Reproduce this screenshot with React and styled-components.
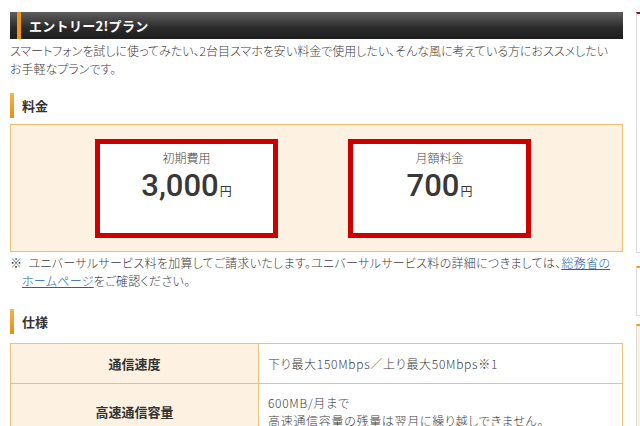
import React from 'react';
import styled, { createGlobalStyle } from 'styled-components';

const GlobalStyle = createGlobalStyle`
    html, body {
        margin: 0;
        padding: 0;
        background: #fff;
        overflow: hidden;
    }
    body {
        font-family: "Noto Sans CJK JP", "Liberation Sans", sans-serif;
        color: #3c3c3c;
        font-size: 12px;
    }
    #root {
        height: 426px;
        overflow: hidden;
    }
`;

const Page = styled.div`
    display: flex;
    align-items: flex-start;
    gap: 13px;
    padding: 12px 0 0 10px;
    width: 900px;
`;

const Main = styled.main`
    width: 613px;
    flex-shrink: 0;
`;

const PlanTitle = styled.h2`
    position: relative;
    margin: 0;
    height: 27px;
    display: flex;
    align-items: center;
    padding-left: 19px;
    background: linear-gradient(#5e5e5e, #2a2a2a 60%, #1e1e1e);
    color: #fff;
    font-size: 13px;
    font-weight: 700;
    letter-spacing: 0.3px;
    &::before {
        content: '';
        position: absolute;
        left: 7px;
        top: 0;
        bottom: 0;
        width: 4px;
        background: #f0960f;
    }
`;

const Lead = styled.p`
    margin: 3px 0 0;
    line-height: 18px;
    font-weight: 300;
    font-feature-settings: 'palt';
    white-space: nowrap;
`;

const SectionTitle = styled.h3`
    margin: ${(p) => p.$top}px 0 0;
    height: 25px;
    display: flex;
    align-items: center;
    border-left: 4px solid #f0a02a;
    border-image: linear-gradient(#f6b84a, #e58c12) 1;
    padding-left: 8px;
    font-size: 13px;
    font-weight: 700;
    color: #333;
`;

const PriceBox = styled.div`
    margin-top: 6px;
    display: flex;
    gap: 70px;
    padding: 14px 0 13px 84px;
    background: #fdf1e1;
    border: 1px solid #e9bf72;
`;

const PriceCard = styled.div`
    width: 173px;
    height: 83px;
    border: 5px solid #cc0000;
    background: #fff;
    display: flex;
    flex-direction: column;
    align-items: center;
    padding-top: 6px;
    box-sizing: content-box;
`;

const CardLabel = styled.div`
    font-size: 12px;
    line-height: 16px;
    font-weight: 300;
    color: #444;
`;

const Amount = styled.div`
    margin-top: 2px;
    font-family: Roboto, "Liberation Sans", sans-serif;
    font-size: 31px;
    font-weight: 500;
    line-height: 36px;
    color: #383838;
    span {
        font-family: "Noto Sans CJK JP", sans-serif;
        font-size: 12px;
        font-weight: 400;
        margin-left: 1px;
    }
`;

const Note = styled.p`
    margin: 2px 0 0;
    padding-left: 12px;
    line-height: 18px;
    font-weight: 300;
    letter-spacing: 0.3px;
    font-feature-settings: 'palt';
    white-space: nowrap;
    a {
        color: #1a64b0;
        text-decoration: underline;
    }
`;

const Mark = styled.span`
    margin-left: -12px;
    margin-right: 6px;
`;

const SpecTable = styled.table`
    margin-top: 9px;
    width: 100%;
    border-collapse: collapse;
    font-size: 12px;
    th, td {
        border: 1px solid #e9c27c;
    }
    th {
        width: 245px;
        background: #fdf1e1;
        font-size: 13px;
        font-weight: 700;
        color: #333;
    }
    td {
        padding: 0 9px;
        line-height: 18px;
        font-weight: 300;
        letter-spacing: 0.7px;
        font-feature-settings: 'palt';
    }
`;

const Row = styled.tr`
    height: ${(p) => p.$h}px;
`;

const Side = styled.aside`
    width: 200px;
    flex-shrink: 0;
    display: flex;
    flex-direction: column;
`;

const Widget = styled.div`
    height: ${(p) => p.$h}px;
    margin-top: ${(p) => p.$gap || 0}px;
    border: 1px solid #ddd;
    border-top: 2px solid ${(p) => p.$accent};
    background: ${(p) => p.$bg || '#fff'};
`;

export default function App() {
    return (
        <>
            <GlobalStyle />
            <Page>
                <Main>
                    <PlanTitle>エントリー2!プラン</PlanTitle>
                    <Lead>
                        スマートフォンを試しに使ってみたい、2台目スマホを安い料金で使用したい、そんな風に考えている方におススメしたい
                        <br />
                        お手軽なプランです。
                    </Lead>

                    <SectionTitle $top={15}>料金</SectionTitle>
                    <PriceBox>
                        <PriceCard>
                            <CardLabel>初期費用</CardLabel>
                            <Amount>3,000<span>円</span></Amount>
                        </PriceCard>
                        <PriceCard>
                            <CardLabel>月額料金</CardLabel>
                            <Amount>700<span>円</span></Amount>
                        </PriceCard>
                    </PriceBox>
                    <Note>
                        <Mark>※</Mark>ユニバーサルサービス料を加算してご請求いたします。ユニバーサルサービス料の詳細につきましては、<a href="#">総務省の</a>
                        <br />
                        <a href="#">ホームページ</a>をご確認ください。
                    </Note>

                    <SectionTitle $top={19}>仕様</SectionTitle>
                    <SpecTable>
                        <tbody>
                            <Row $h={40}>
                                <th>通信速度</th>
                                <td>下り最大150Mbps／上り最大50Mbps※1</td>
                            </Row>
                            <Row $h={56}>
                                <th>高速通信容量</th>
                                <td>
                                    600MB/月まで
                                    <br />
                                    高速通信容量の残量は翌月に繰り越しできません。
                                </td>
                            </Row>
                        </tbody>
                    </SpecTable>
                </Main>
                <Side>
                    <Widget $h={238} $accent="#a51010" />
                    <Widget $h={47} $accent="#f0a02a" $gap={13} />
                    <Widget $h={120} $accent="#f0a02a" $bg="#fdf1e1" $gap={8} />
                </Side>
            </Page>
        </>
    );
}
